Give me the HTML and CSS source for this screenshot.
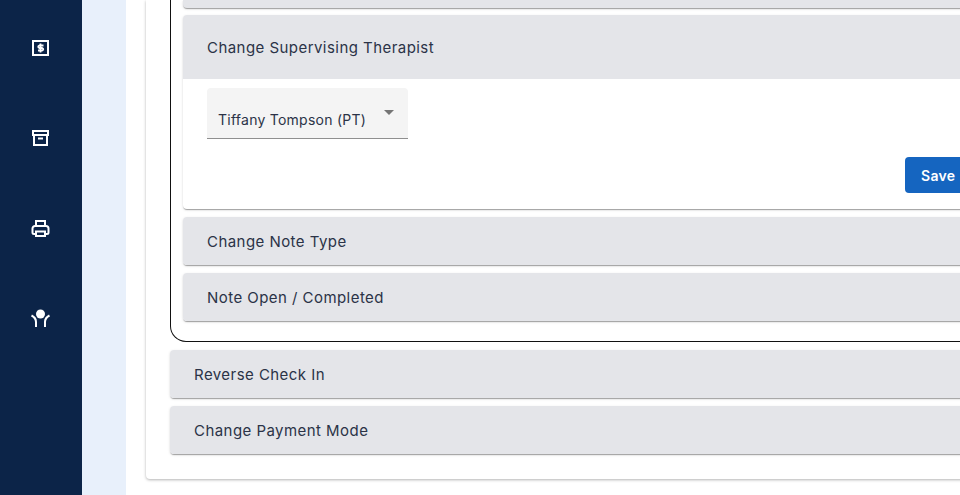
FILE: index.html
```html
<!DOCTYPE html>
<html lang="en">
<head>
    <meta charset="UTF-8">
    <meta name="viewport" content="width=device-width, initial-scale=1.0">
    <title>Note Settings</title>
    <link rel="stylesheet" href="styles.css">
</head>
<body>
    <aside class="sidebar">
        <svg class="side-icon" viewBox="0 0 24 24" fill="none" stroke="#fff" stroke-width="2">
            <rect x="5" y="5" width="15" height="14"/>
            <path d="M15.500 9.500h-4.300a1.300 1.300 0 0 0 0 2.500h3.100a1.300 1.300 0 0 1 0 2.500H10M12.500 7.500v9" stroke-width="1.800"/>
        </svg>
        <svg class="side-icon" viewBox="0 0 24 24" fill="none" stroke="#fff" stroke-width="2">
            <path d="M5 5h15v4H5zM6 9v10h13V9"/>
            <path d="M10 12.500h5"/>
        </svg>
        <svg class="side-icon" viewBox="0 0 24 24" fill="none" stroke="#fff" stroke-width="2">
            <path d="M8 10V5h9v5"/>
            <path d="M8 18H6a1.500 1.500 0 0 1-1.500-1.500v-4A2.500 2.500 0 0 1 7 10h11a2.500 2.500 0 0 1 2.500 2.500v4A1.500 1.500 0 0 1 19 18h-2"/>
            <path d="M8 15.500h9V20H8z"/>
        </svg>
        <svg class="side-icon" viewBox="0 0 24 24" fill="none" stroke="#fff" stroke-width="2">
            <circle cx="12.500" cy="8" r="4.500" fill="#fff" stroke="none"/>
            <path d="M3.500 9.500C6.500 11 8 13 8 16v5M21.500 9.500C18.500 11 17 13 17 16v5"/>
        </svg>
    </aside>
    <div class="gutter"></div>
    <main class="main">
        <section class="card">
            <div class="note-box">
                <div class="panel panel-stub"></div>
                <div class="panel">
                    <div class="panel-head panel-head-open">Change Supervising Therapist</div>
                    <div class="panel-body">
                        <div class="select">
                            <span>Tiffany Tompson (PT)</span>
                            <i class="caret"></i>
                        </div>
                        <div class="actions">
                            <button class="save">Save</button>
                        </div>
                    </div>
                </div>
                <div class="panel"><div class="panel-head">Change Note Type</div></div>
                <div class="panel"><div class="panel-head">Note Open / Completed</div></div>
            </div>
            <div class="panel panel-outer"><div class="panel-head">Reverse Check In</div></div>
            <div class="panel panel-outer"><div class="panel-head">Change Payment Mode</div></div>
        </section>
    </main>
</body>
</html>
```

FILE: styles.css
```css
html, body {
    height: 100%;
}
body {
    font-family: Inter, "Open Sans", sans-serif;
    display: flex;
    height: 495px;
    margin: 0;
    overflow: hidden;
    background: #fff;
    color: #2b3347;
}
.sidebar {
    width: 82px;
    flex-shrink: 0;
    display: flex;
    flex-direction: column;
    align-items: center;
    gap: 66px;
    padding: 36px 2px 0 0;
    box-sizing: border-box;
    background: #0c2448;
}
.side-icon {
    width: 24px;
    height: 24px;
}
.gutter {
    width: 44px;
    flex-shrink: 0;
    background: #e8f0fb;
}
.main {
    flex: 1;
    min-width: 0;
    padding-left: 20px;
    overflow: hidden;
    padding-bottom: 6px;
}
.card {
    width: 876px;
    height: 479px;
    box-sizing: border-box;
    background: #fff;
    border-radius: 0 0 4px 4px;
    box-shadow: 0 1px 3px rgba(0, 0, 0, 0.3);
}
.note-box {
    margin-left: 24px;
    height: 342px;
    padding: 0 12px;
    box-sizing: border-box;
    border: 1px solid #111;
    border-top: none;
    border-radius: 0 0 0 16px;
}
.panel {
    margin-bottom: 8px;
    border-radius: 4px;
    background: #fff;
    box-shadow: 0 2px 1px -1px rgba(0, 0, 0, 0.2), 0 1px 1px rgba(0, 0, 0, 0.14), 0 1px 3px rgba(0, 0, 0, 0.12);
}
.panel-stub {
    height: 8px;
    margin-bottom: 7px;
    background: #e4e5e9;
    border-radius: 0 0 4px 4px;
}
.panel-outer {
    margin-left: 24px;
}
.note-box + .panel-outer {
    margin-top: 8px;
}
.panel-head {
    height: 48px;
    display: flex;
    align-items: center;
    padding-left: 24px;
    font-size: 15px;
    letter-spacing: 0.45px;
    background: #e4e5e9;
    border-radius: 4px;
}
.panel-head-open {
    height: 64px;
    border-radius: 4px 4px 0 0;
}
.panel-body {
    padding: 9px 24px 16px;
}
.select {
    position: relative;
    width: 201px;
    height: 51px;
    box-sizing: border-box;
    padding: 23px 0 0 11px;
    font-size: 14px;
    letter-spacing: 0.25px;
    background: #f4f4f4;
    border-bottom: 1px solid #8f8f8f;
    border-radius: 4px 4px 0 0;
}
.caret {
    position: absolute;
    top: 22px;
    right: 14px;
    border-left: 5px solid transparent;
    border-right: 5px solid transparent;
    border-top: 5px solid #757575;
}
.actions {
    display: flex;
    justify-content: flex-end;
    margin-top: 18px;
}
.save {
    width: 80px;
    height: 36px;
    padding: 0 0 0 16px;
    text-align: left;
    font-family: inherit;
    font-size: 14px;
    font-weight: 600;
    letter-spacing: 0.3px;
    color: #fff;
    background: #1565c0;
    border: none;
    border-radius: 4px;
}
```
